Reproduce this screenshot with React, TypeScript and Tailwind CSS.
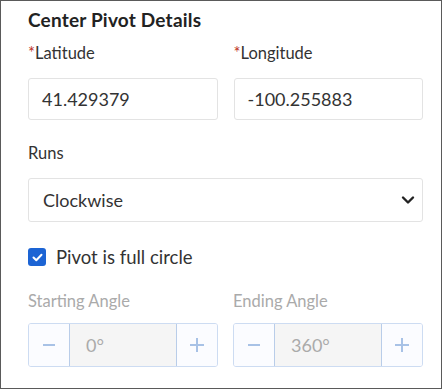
import React from "react";

function Stepper({ value }: { value: string }) {
  return (
    <div className="flex h-[44px] rounded-[3px] border border-[#cddcf2] overflow-hidden">
      <div className="w-[41px] flex items-center justify-center bg-[#fbfcff] border-r border-[#b9cde9]">
        <svg width="14" height="14" viewBox="0 0 14 14"><path d="M1 7h12" stroke="#a8c2e6" strokeWidth="2" /></svg>
      </div>
      <div className="flex-1 flex items-center pl-[16px] bg-[#f5f5f5] text-[18px] text-[#aaaaaa]">{value}</div>
      <div className="w-[41px] flex items-center justify-center bg-[#fbfcff] border-l border-[#b9cde9]">
        <svg width="16" height="16" viewBox="0 0 16 16"><path d="M1 8h14M8 1v14" stroke="#a8c2e6" strokeWidth="2" /></svg>
      </div>
    </div>
  );
}

export default function App() {
  return (
    <div className="w-[443px] h-[391px] bg-white" style={{ fontFamily: "Lato, 'Open Sans', sans-serif" }}>
      <div className="w-[442px] h-[389px] border border-[#5a5a5a] pl-[27px] pr-[18px] pt-[8px]">
        <div className="text-[19px] font-bold text-[#222] leading-[22px] tracking-[0.2px]">Center Pivot Details</div>
        <div className="mt-[12px] grid grid-cols-2 gap-[16px]">
          <div>
            <div className="text-[16.5px] text-[#333] leading-[20px]"><span className="text-[#c0392b]">*</span>Latitude</div>
            <div className="mt-[15px] h-[42px] border border-[#e3e3e3] rounded-[3px] flex items-center pl-[13px] text-[18px] text-[#333]">41.429379</div>
          </div>
          <div>
            <div className="text-[16.5px] text-[#333] leading-[20px]"><span className="text-[#c0392b]">*</span>Longitude</div>
            <div className="mt-[15px] h-[42px] border border-[#e3e3e3] rounded-[3px] flex items-center pl-[13px] text-[18px] text-[#333]">-100.255883</div>
          </div>
        </div>
        <div className="mt-[23px] text-[16.5px] text-[#333] leading-[20px]">Runs</div>
        <div className="mt-[15px] h-[44px] border border-[#e3e3e3] rounded-[3px] flex items-center justify-between pl-[14px] pr-[7px] text-[18px] text-[#333]">
          <span>Clockwise</span>
          <svg width="14" height="10" viewBox="0 0 14 10"><path d="M2 2.5l5 5 5-5" stroke="#222" strokeWidth="2.4" fill="none" strokeLinecap="round" strokeLinejoin="round" /></svg>
        </div>
        <div className="mt-[24px] flex items-center gap-[10px]">
          <div className="w-[18px] h-[18px] rounded-[3px] bg-[#1c64d4] flex items-center justify-center">
            <svg width="11" height="9" viewBox="0 0 11 9"><path d="M1.5 4.5l2.8 2.8L9.5 1.8" stroke="white" strokeWidth="2" fill="none" strokeLinecap="round" strokeLinejoin="round" /></svg>
          </div>
          <span className="text-[18.5px] text-[#333] leading-[22px]">Pivot is full circle</span>
        </div>
        <div className="mt-[23px] grid grid-cols-2 gap-[15px]">
          <div>
            <div className="text-[16.5px] text-[#aaaaaa] leading-[20px]">Starting Angle</div>
            <div className="mt-[12px]"><Stepper value="0°" /></div>
          </div>
          <div>
            <div className="text-[16.5px] text-[#aaaaaa] leading-[20px]">Ending Angle</div>
            <div className="mt-[12px]"><Stepper value="360°" /></div>
          </div>
        </div>
      </div>
    </div>
  );
}
